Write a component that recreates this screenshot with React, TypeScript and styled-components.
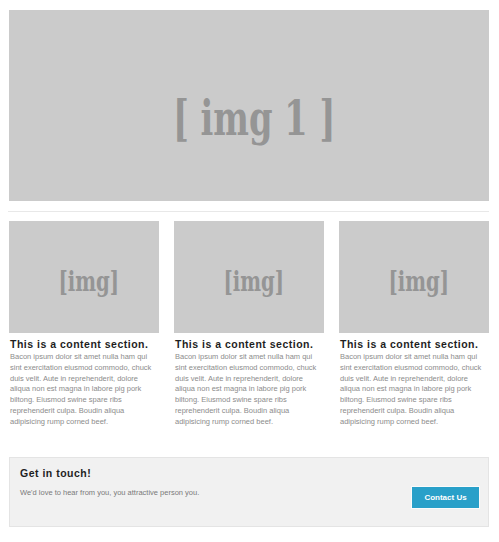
import React from "react";
import styled, { createGlobalStyle } from "styled-components";

const Global = createGlobalStyle`
  html, body { margin: 0; padding: 0; background: #ffffff; }
  body { font-family: "Liberation Sans", Arial, sans-serif; }
`;

const Page = styled.div`
  width: 480px;
  padding: 10px 10px 0 9px;
`;

const Placeholder = styled.div<{ $h: number; $dy: number; $dx: number }>`
  height: ${(p) => p.$h}px;
  background: #cbcbcb;
  display: flex;
  align-items: center;
  justify-content: center;
  box-sizing: border-box;
  padding-top: ${(p) => p.$dy}px;
  padding-left: ${(p) => p.$dx}px;
`;

const PlaceholderLabel = styled.span<{ $size: number }>`
  display: inline-block;
  color: #959595;
  font-family: "DejaVu Serif Condensed", "DejaVu Serif", serif;
  font-weight: bold;
  font-size: ${(p) => p.$size}px;
  line-height: 1;
  white-space: pre;
  transform: scaleX(0.78);
`;

const Divider = styled.hr`
  border: 0;
  height: 1px;
  background: #e8e8e8;
  margin: 10px 0 9px -1px;
`;

const Columns = styled.div`
  display: grid;
  grid-template-columns: repeat(3, 150px);
  column-gap: 15px;
`;

const Column = styled.div`
  display: flex;
  flex-direction: column;
`;

const Heading = styled.h2`
  margin: 5px 0 1px 1px;
  font-size: 10.5px;
  line-height: 13px;
  font-weight: bold;
  letter-spacing: 0.5px;
  color: #1e1e1e;
`;

const Body = styled.p`
  margin: 0 0 0 1px;
  font-size: 7.5px;
  line-height: 10.8px;
  color: #8c8c8c;
`;

const Touch = styled.div`
  margin-top: 29px;
  background: #f1f1f1;
  border: 1px solid #e4e4e4;
  padding: 9px 9px 18px 10px;
`;

const TouchHeading = styled.h3`
  margin: 0;
  font-size: 10.5px;
  line-height: 13px;
  font-weight: bold;
  letter-spacing: 0.5px;
  color: #1e1e1e;
`;

const TouchRow = styled.div`
  display: flex;
  justify-content: space-between;
  align-items: flex-start;
  margin-top: 7px;
`;

const TouchText = styled.p`
  margin: 1.5px 0 0;
  font-size: 7.5px;
  line-height: 10.8px;
  color: #7a7a7a;
`;

const Button = styled.button`
  width: 67px;
  height: 21px;
  border: 0;
  background: #29a0c9;
  color: #ffffff;
  font-family: "Liberation Sans", Arial, sans-serif;
  font-weight: bold;
  font-size: 8px;
  padding: 0;
  box-shadow: 0 0 0 1px rgba(255, 255, 255, 0.7);
  cursor: pointer;
`;

const text =
  "Bacon ipsum dolor sit amet nulla ham qui sint exercitation eiusmod commodo, chuck duis velit. Aute in reprehenderit, dolore aliqua non est magna in labore pig pork biltong. Eiusmod swine spare ribs reprehenderit culpa. Boudin aliqua adipisicing rump corned beef.";

export default function App() {
  return (
    <>
      <Global />
      <Page>
        <Placeholder $h={191} $dy={24} $dx={10}>
          <PlaceholderLabel $size={48}>[ img 1 ]</PlaceholderLabel>
        </Placeholder>
        <Divider />
        <Columns>
          {[0, 1, 2].map((i) => (
            <Column key={i}>
              <Placeholder $h={112} $dy={10} $dx={9}>
                <PlaceholderLabel $size={28}>[img]</PlaceholderLabel>
              </Placeholder>
              <Heading>This is a content section.</Heading>
              <Body>{text}</Body>
            </Column>
          ))}
        </Columns>
        <Touch>
          <TouchHeading>Get in touch!</TouchHeading>
          <TouchRow>
            <TouchText>We'd love to hear from you, you attractive person you.</TouchText>
            <Button>Contact Us</Button>
          </TouchRow>
        </Touch>
      </Page>
    </>
  );
}
